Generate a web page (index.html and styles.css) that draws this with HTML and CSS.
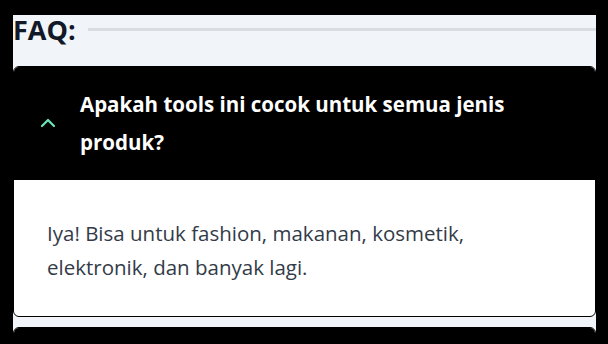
FILE: index.html
```html
<html lang="en"><head>
  <meta charset="UTF-8">
  <meta name="viewport" content="width=device-width, initial-scale=1.0">
  <title>FAQ</title>
  <link rel="stylesheet" href="styles.css">
</head>
<body>
  <div class="faq">
    <div class="faq-title">
      <h2>FAQ:</h2>
      <span class="rule"></span>
    </div>

    <div class="item open">
      <div class="question">
        <svg class="chevron" width="16" height="10" viewBox="0 0 16 10">
          <path d="M2 8 L8 2 L14 8" fill="none" stroke="#6ee7b7" stroke-width="2.2" stroke-linecap="round" stroke-linejoin="round"/>
        </svg>
        <span>Apakah tools ini cocok untuk semua jenis produk?</span>
      </div>
      <div class="answer">
        <p>Iya! Bisa untuk fashion, makanan, kosmetik, elektronik, dan banyak lagi.</p>
      </div>
    </div>

    <div class="item">
      <div class="question">
        <svg class="chevron" width="16" height="10" viewBox="0 0 16 10">
          <path d="M2 2 L8 8 L14 2" fill="none" stroke="#6ee7b7" stroke-width="2.2" stroke-linecap="round" stroke-linejoin="round"/>
        </svg>
        <span>Berapa lama proses pembuatannya?</span>
      </div>
    </div>
  </div>
</body></html>
```

FILE: styles.css
```css
html, body {
  margin: 0;
  padding: 0;
  background-color: black;
  font-family: "Open Sans", "Noto Sans", sans-serif;
}
body {
  padding: 15px 12px 0 13px;
}
.faq {
  background-color: #f1f5f9;
}
.faq-title {
  display: flex;
  align-items: center;
  gap: 12px;
  height: 30px;
}
.faq-title h2 {
  margin: 0;
  font-size: 27px;
  font-weight: 700;
  color: #111827;
  line-height: 30px;
}
.rule {
  flex: 1;
  height: 3px;
  margin-top: -2px;
  background-color: #d9dce2;
}
.item {
  margin-top: 21px;
  border: 1px solid black;
  border-radius: 6px;
  overflow: hidden;
  background-color: white;
}
.item + .item {
  margin-top: 10px;
}
.question {
  display: flex;
  align-items: center;
  gap: 24px;
  padding: 18px 40px 19px 26px;
  background-color: black;
  color: white;
  font-size: 20.5px;
  font-weight: 700;
  line-height: 38px;
}
.chevron {
  flex-shrink: 0;
}
.answer {
  padding: 36px 33px 32px;
}
.answer p {
  margin: 0;
  font-size: 20.5px;
  line-height: 34px;
  color: #333b48;
}
```
